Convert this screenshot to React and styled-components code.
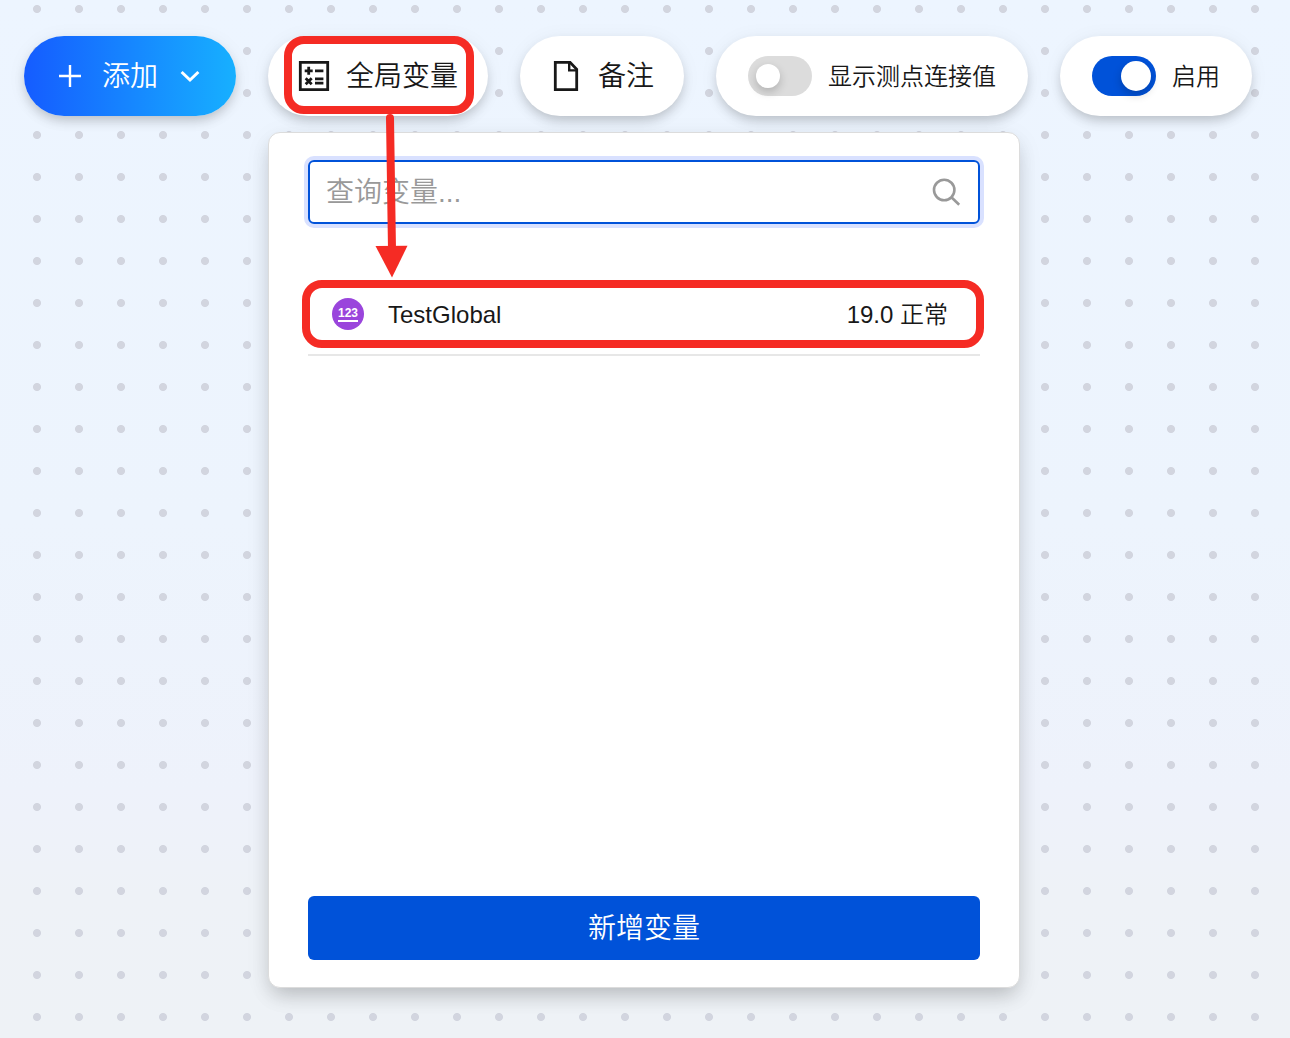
import { useState } from "react";
import styled, { createGlobalStyle, css } from "styled-components";

export default function App() {
  const [showValues, setShowValues] = useState(false);
  const [enabled, setEnabled] = useState(true);
  const [search, setSearch] = useState("");

  const variables = [{ name: "TestGlobal", value: "19.0", status: "正常" }];

  return (
    <Canvas>
      <GlobalStyle />
      <Toolbar>
        <PillButton $primary type="button">
          <PlusIcon />
          <Text>添加</Text>
          <ChevronIcon />
        </PillButton>

        <Dropdown>
          <PillButton type="button" aria-expanded="true">
            <VariableIcon />
            <Text>全局变量</Text>
          </PillButton>

          <Panel>
            <SearchBox>
              <SearchInput
                type="text"
                aria-label="查询变量"
                placeholder="查询变量..."
                value={search}
                onChange={(e) => setSearch(e.target.value)}
              />
              <SearchIcon />
            </SearchBox>
            <List>
              {variables
                .filter((v) => v.name.includes(search))
                .map((v) => (
                  <Row key={v.name}>
                    <Badge>
                      <BadgeText>123</BadgeText>
                    </Badge>
                    <Name>{v.name}</Name>
                    <Text>
                      {v.value} {v.status}
                    </Text>
                    <RowMark />
                  </Row>
                ))}
            </List>
            <CreateButton type="button">
              <Text>新增变量</Text>
            </CreateButton>
          </Panel>

          <ButtonMark />
          <Arrow />
        </Dropdown>

        <PillButton type="button">
          <NoteIcon />
          <Text>备注</Text>
        </PillButton>

        <PillLabel>
          <Switch
            type="checkbox"
            role="switch"
            checked={showValues}
            onChange={() => setShowValues(!showValues)}
          />
          <Text>显示测点连接值</Text>
        </PillLabel>

        <PillLabel>
          <Switch
            type="checkbox"
            role="switch"
            checked={enabled}
            onChange={() => setEnabled(!enabled)}
          />
          <Text>启用</Text>
        </PillLabel>
      </Toolbar>
    </Canvas>
  );
}

// icons

function PlusIcon() {
  return (
    <Icon viewBox="0 0 32 32" strokeWidth="2.4">
      <path d="M16 5v22M5 16h22" />
    </Icon>
  );
}

function ChevronIcon() {
  return (
    <Icon viewBox="0 0 32 32" strokeWidth="3">
      <path d="M7.6 12l8.4 8 8.4-8" />
    </Icon>
  );
}

function VariableIcon() {
  return (
    <Icon viewBox="0 0 32 32" strokeWidth="2.8">
      <path d="M2.3 2.3h27.4v27.4H2.3z" />
      <path d="M10.7 6.8v8M6.7 10.8h8M17 10.8h8.4M17 18.9h8.4M17 23.2h8.4" />
      <path d="M7.7 18.2l6 6M13.7 18.2l-6 6" />
    </Icon>
  );
}

function NoteIcon() {
  return (
    <Icon viewBox="0 0 32 32" strokeWidth="2.8">
      <path d="M5.3 2.3h14.8l6.6 7v20.4H5.3z" />
      <path d="M19.2 2.3v8.1h7.5" strokeWidth="2.4" />
    </Icon>
  );
}

function SearchIcon() {
  return (
    <Icon viewBox="0 0 32 32" strokeWidth="2.6">
      <circle cx="14.2" cy="14" r="10.2" />
      <path d="M21.4 21.2l7.8 7.6" />
    </Icon>
  );
}

function Arrow() {
  return (
    <ArrowSvg viewBox="0 0 32 164">
      <path d="M14 4L16 136" stroke="#f52b24" strokeWidth="8" strokeLinecap="round" />
      <path d="M-0.5 132L31.5 131.8L16 163.5z" fill="#f52b24" />
    </ArrowSvg>
  );
}

// styles

const GlobalStyle = createGlobalStyle`
  * {
    box-sizing: border-box;
  }

  body {
    margin: 0;
    color: #181818;
    font-family: "Liberation Sans", "Noto Sans CJK SC", sans-serif;
    font-weight: 350;
    line-height: 32px;
  }

  button,
  input {
    font: inherit;
    color: inherit;
  }
`;

const Canvas = styled.main`
  min-height: 100vh;
  background:
    radial-gradient(circle, #d2d5df 0 3.6px, transparent 4.4px) 16px -12px / 42px 42px,
    linear-gradient(180deg, #edf5ff 0%, #edf4fd 50%, #eef2fb 76%, #eef2f7 86%, #eef2f6 100%);
`;

const Toolbar = styled.header`
  display: flex;
  gap: 32px;
  padding: 36px 24px;
`;

const pill = css`
  display: flex;
  align-items: center;
  flex: none;
  gap: 16px;
  height: 80px;
  border: 0;
  border-radius: 40px;
  background: #fff;
  box-shadow: 0 6px 12px -2px rgba(0, 0, 0, 0.2), 0 2px 20px rgba(0, 0, 0, 0.05);
  white-space: nowrap;
  cursor: pointer;
`;

const PillButton = styled.button`
  ${pill}
  padding: 0 30px;
  font-size: 28px;

  ${({ $primary }) =>
    $primary &&
    css`
      color: #fff;
      background: linear-gradient(90deg, #155cff, #17b0ff);
    `}
`;

const PillLabel = styled.label`
  ${pill}
  padding: 0 32px;
  font-size: 24px;
`;

const Text = styled.span`
  padding-top: 2px;
`;

const Icon = styled.svg`
  flex: none;
  width: 32px;
  height: 32px;
  fill: none;
  stroke: currentColor;
`;

const Switch = styled.input`
  appearance: none;
  display: flex;
  align-items: center;
  width: 64px;
  height: 40px;
  margin: 0;
  padding: 0 8px;
  border-radius: 20px;
  background: #dcdcdc;
  cursor: pointer;

  &::before {
    content: "";
    width: 24px;
    height: 24px;
    border-radius: 50%;
    background: #fff;
    box-shadow: 0 4px 10px rgba(0, 0, 0, 0.2);
  }

  &:checked {
    justify-content: flex-end;
    padding: 0 5px;
    background: #0052d9;
  }

  &:checked::before {
    width: 30px;
    height: 30px;
  }
`;

const Dropdown = styled.div`
  position: relative;
`;

const Panel = styled.section`
  position: absolute;
  top: 96px;
  left: 0;
  display: flex;
  flex-direction: column;
  width: 752px;
  min-height: calc(100vh - 182px);
  padding: 27px 39px;
  border: 1px solid #dcdcdc;
  border-radius: 12px;
  background: #fff;
  box-shadow: 0 10px 20px -4px rgba(0, 0, 0, 0.2), 0 6px 28px rgba(0, 0, 0, 0.06);
`;

const SearchBox = styled.div`
  display: flex;
  align-items: center;
  height: 64px;
  padding: 0 16px;
  border: 2px solid #0052d9;
  border-radius: 6px;
  box-shadow: 0 0 0 4px #d9e1ff;
  color: #999;
`;

const SearchInput = styled.input`
  flex: 1;
  min-width: 0;
  height: 60px;
  padding: 2px 0 0;
  border: 0;
  outline: 0;
  background: none;
  color: #181818;
  font-size: 28px;

  &::placeholder {
    color: #999;
  }
`;

const List = styled.ul`
  flex: 1;
  margin: 50px 0 0;
  padding: 0;
  list-style: none;
`;

const Row = styled.li`
  position: relative;
  display: flex;
  align-items: center;
  gap: 24px;
  height: 82px;
  padding: 0 32px 0 24px;
  border-bottom: 2px solid #e7e7e7;
  font-size: 24px;
`;

const Badge = styled.span`
  display: flex;
  align-items: center;
  justify-content: center;
  width: 32px;
  height: 32px;
  border-radius: 50%;
  background: #9a45dc;
`;

const BadgeText = styled.span`
  border-bottom: 2px solid #fff;
  color: #fff;
  font-size: 12px;
  font-weight: 700;
  line-height: 14px;
`;

const Name = styled(Text)`
  flex: 1;
`;

const CreateButton = styled.button`
  display: flex;
  align-items: center;
  justify-content: center;
  height: 64px;
  border: 0;
  border-radius: 6px;
  background: #0052d9;
  color: #fff;
  font-size: 28px;
  cursor: pointer;
`;

// red guide marks

const mark = css`
  position: absolute;
  border: 8px solid #f52b24;
  border-radius: 20px;
  pointer-events: none;
`;

const ButtonMark = styled.span`
  ${mark}
  inset: 0 14px 2px 16px;
`;

const RowMark = styled.span`
  ${mark}
  inset: 6px -4px 6px -6px;
`;

const ArrowSvg = styled.svg`
  position: absolute;
  top: 78px;
  left: 108px;
  width: 32px;
  height: 164px;
  overflow: visible;
  fill: none;
  pointer-events: none;
`;
